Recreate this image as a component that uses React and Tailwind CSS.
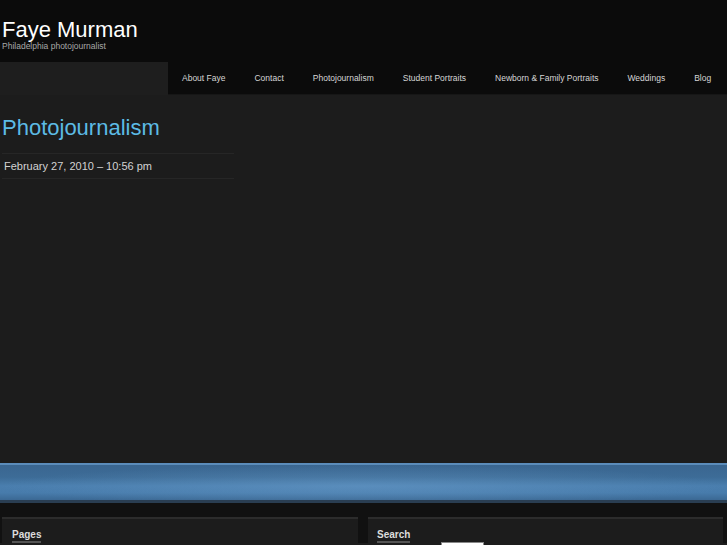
import React from "react";

const nav = ["About Faye", "Contact", "Photojournalism", "Student Portraits", "Newborn & Family Portraits", "Weddings", "Blog"];

export default function App() {
  return (
    <div className="w-[727px] h-[545px] overflow-hidden bg-[#1c1c1c] font-['Liberation_Sans',Arial,sans-serif]">
      <header className="h-[62px] bg-[#0b0b0b] pl-[2px] pt-[17px]">
        <h1 className="text-[22px] leading-[25px] text-white">Faye Murman</h1>
        <p className="text-[8.5px] leading-[9px] text-[#a8a8a8]">Philadelphia photojournalist</p>
      </header>
      <div className="flex h-[33px]">
        <div className="w-[168px] shrink-0 bg-[#1e1e1e]" />
        <nav className="flex flex-1 items-center bg-[#0b0b0b] border-b border-[#161616] border-r-2 border-r-[#222] pl-[14px]">
          {nav.map((n) => (
            <a key={n} className="text-[8.5px] text-[#d6d6d6] mr-[29px] whitespace-nowrap">{n}</a>
          ))}
        </nav>
      </div>
      <main className="h-[368px] pt-[21px]">
        <h2 className="pl-[2px] text-[22px] leading-[24px] text-[#5cbbe5]">Photojournalism</h2>
        <div className="mt-[13px] w-[232px] ml-[2px] border-t border-b border-[#262626] py-[5px] pl-[2px]">
          <p className="text-[11px] leading-[14px] text-[#d2d2d2]">February 27, 2010 – 10:56 pm</p>
        </div>
      </main>
      <div className="h-[40px] border-t-2 border-[#5b8cba] border-b-[3px] border-b-[#2a3e52] bg-[radial-gradient(ellipse_50%_60%_at_50%_60%,rgba(120,170,215,0.35),transparent),linear-gradient(to_bottom,#3a6690_0%,#3d6c97_35%,#4a7eae_60%,#477bab_80%,#3b6893_100%)]" />
      <div className="bg-[#111] pt-[14px] flex gap-[10px] px-[2px] h-[40px]">
        <section className="flex flex-1 items-start bg-[#1c1c1c] border-t-2 border-[#2c2c2c] pl-[10px] pt-[10px]">
          <h3 className="text-[10px] font-bold text-[#dcdcdc] border-b-2 border-[#555] leading-[12px]">Pages</h3>
        </section>
        <section className="flex flex-1 items-start bg-[#1c1c1c] border-t-2 border-[#2c2c2c] pl-[9px] pt-[10px] mr-[2px] relative">
          <h3 className="text-[10px] font-bold text-[#dcdcdc] border-b-2 border-[#555] leading-[12px]">Search</h3>
          <div className="absolute left-[73px] top-[23px] w-[43px] h-[10px] bg-white border border-[#888]" />
        </section>
      </div>
    </div>
  );
}
